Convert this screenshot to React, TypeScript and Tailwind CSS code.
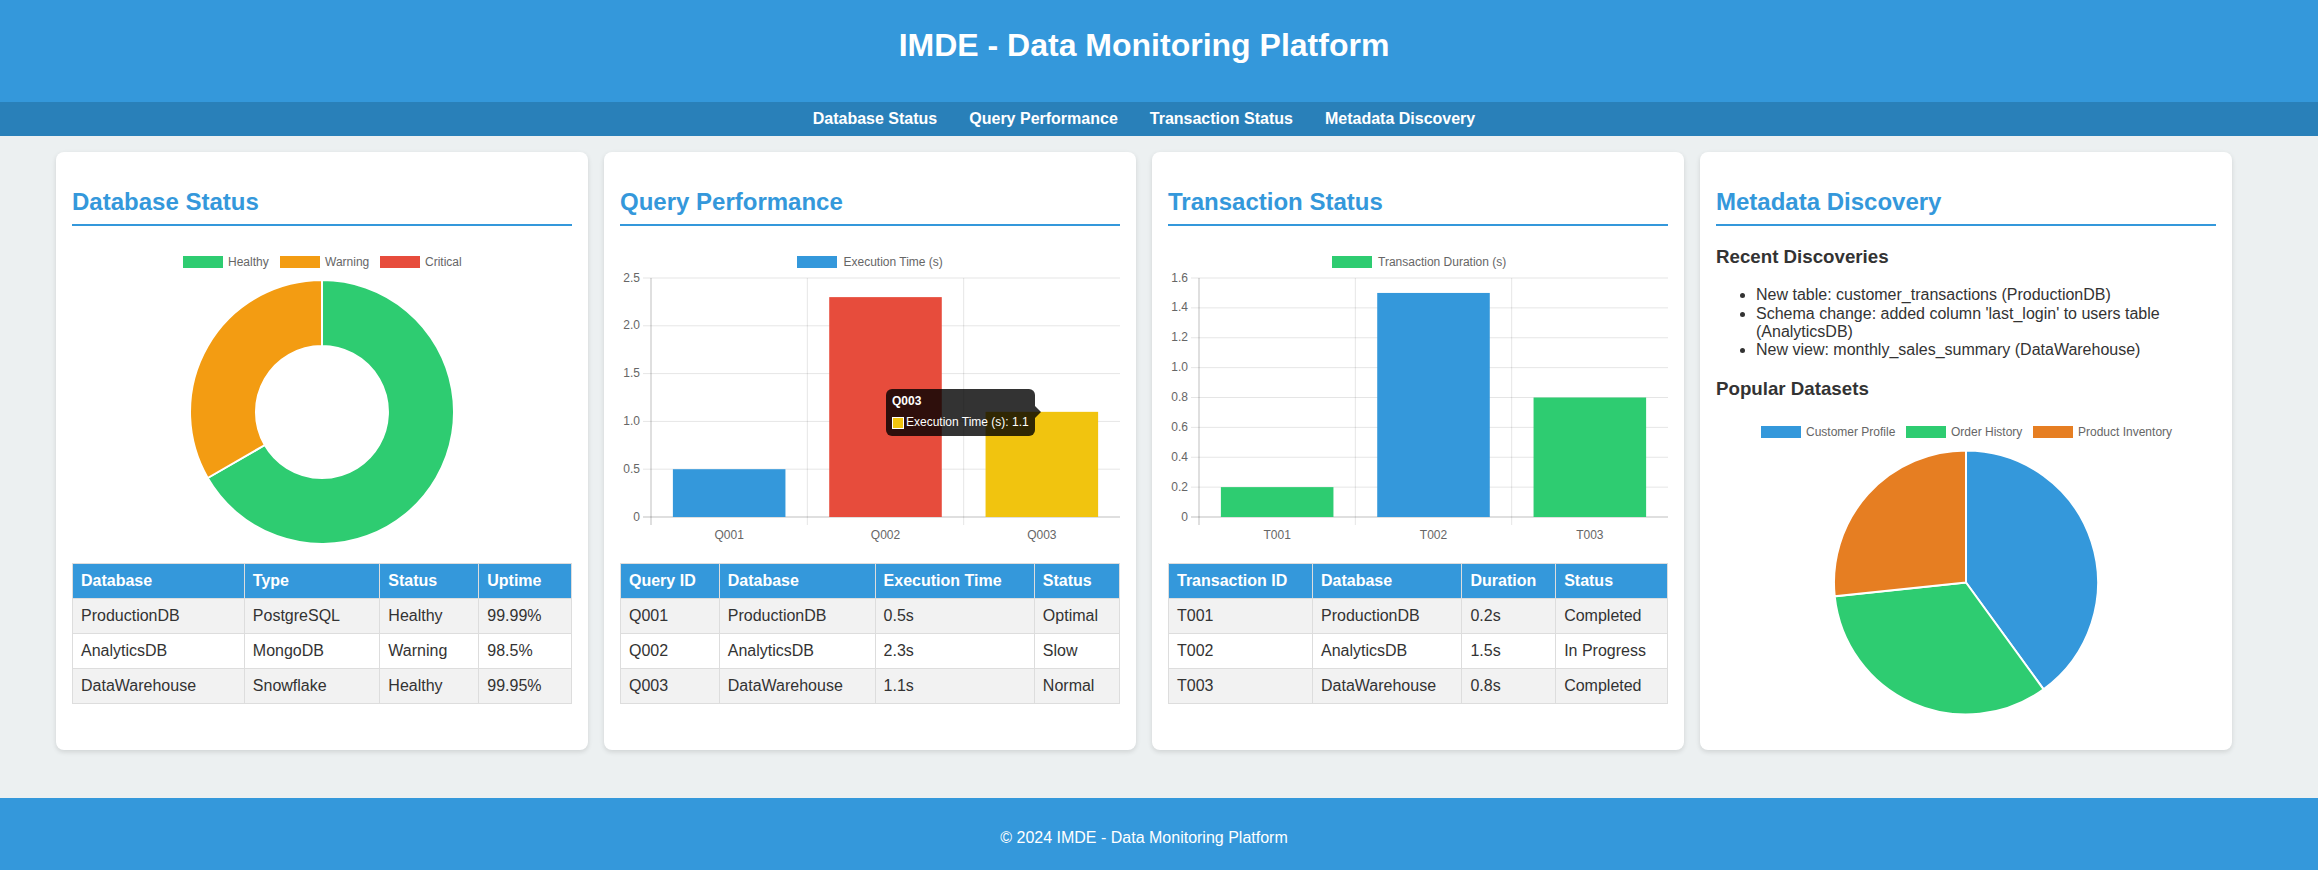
import React from "react"

const FONT = "'Liberation Sans', Arial, Helvetica, sans-serif"

type Legend = { label: string; color: string; boxX: number; textX: number }

type BarChartProps = {
  legend: Legend
  yTicks: string[]
  max: number
  labels: string[]
  values: number[]
  colors: string[]
  tooltip?: boolean
}

// plot box inside the 500x300 chart area
const L = 31
const R = 500
const T = 32
const B = 271

function LegendRow({ items }: { items: Legend[] }) {
  return (
    <g>
      {items.map((it) => (
        <g key={it.label}>
          <rect x={it.boxX} y={10} width={40} height={12} fill={it.color} />
          <text x={it.textX} y={20} fontSize={12} fill="#666" fontFamily={FONT}>
            {it.label}
          </text>
        </g>
      ))}
    </g>
  )
}

function BarChart({ legend, yTicks, max, labels, values, colors, tooltip }: BarChartProps) {
  const n = yTicks.length - 1
  const step = (B - T) / n
  const cw = (R - L) / labels.length
  const bw = cw * 0.72

  return (
    <svg width={500} height={300} className="block overflow-visible">
      <LegendRow items={[legend]} />

      {/* horizontal grid */}
      {yTicks.map((t, i) => {
        const y = T + i * step
        return (
          <g key={t}>
            <line
              x1={L - 8}
              x2={R}
              y1={y}
              y2={y}
              stroke={i === n ? "rgba(0,0,0,0.25)" : "rgba(0,0,0,0.1)"}
              strokeWidth={1}
            />
            <text x={20} y={y + 3.5} fontSize={12} fill="#666" textAnchor="end" fontFamily={FONT}>
              {t}
            </text>
          </g>
        )
      })}

      {/* vertical grid */}
      {labels.map((_, i) => {
        const x = L + i * cw
        return (
          <line
            key={i}
            x1={x}
            x2={x}
            y1={T}
            y2={B + 8}
            stroke={i === 0 ? "rgba(0,0,0,0.25)" : "rgba(0,0,0,0.1)"}
            strokeWidth={1}
          />
        )
      })}

      {/* bars */}
      {values.map((v, i) => {
        const cx = L + cw * (i + 0.5)
        const h = (v / max) * (B - T)
        return <rect key={i} x={cx - bw / 2} y={B - h} width={bw} height={h} fill={colors[i]} />
      })}

      {labels.map((l, i) => (
        <text
          key={l}
          x={L + cw * (i + 0.5)}
          y={292.5}
          fontSize={12}
          fill="#666"
          textAnchor="middle"
          fontFamily={FONT}
        >
          {l}
        </text>
      ))}

      {tooltip && (
        <g>
          <rect x={266} y={143} width={149} height={47} rx={6} fill="rgba(0,0,0,0.8)" />
          <path d="M415 160 L421 166 L415 172 Z" fill="rgba(0,0,0,0.8)" />
          <text x={272} y={159} fontSize={12} fontWeight="bold" fill="#fff" fontFamily={FONT}>
            Q003
          </text>
          <rect x={272.5} y={171.5} width={11} height={11} fill="#f1c40f" stroke="#fff" strokeWidth={1} />
          <text x={286} y={180} fontSize={12} fill="#fff" fontFamily={FONT}>
            Execution Time (s): 1.1
          </text>
        </g>
      )}
    </svg>
  )
}

function DonutChart() {
  return (
    <svg width={500} height={300} className="block">
      <LegendRow
        items={[
          { label: "Healthy", color: "#2ecc71", boxX: 111, textX: 156 },
          { label: "Warning", color: "#f39c12", boxX: 208, textX: 253 },
          { label: "Critical", color: "#e74c3c", boxX: 308, textX: 353 },
        ]}
      />
      <path
        d="M250 34 A132 132 0 1 1 135.7 232 L192.8 199 A66 66 0 1 0 250 100 Z"
        fill="#2ecc71"
        stroke="#fff"
        strokeWidth={2}
      />
      <path
        d="M135.7 232 A132 132 0 0 1 250 34 L250 100 A66 66 0 0 0 192.8 199 Z"
        fill="#f39c12"
        stroke="#fff"
        strokeWidth={2}
      />
    </svg>
  )
}

function PieChart() {
  return (
    <svg width={500} height={300} className="block">
      <LegendRow
        items={[
          { label: "Customer Profile", color: "#3498db", boxX: 45, textX: 90 },
          { label: "Order History", color: "#2ecc71", boxX: 190, textX: 235 },
          { label: "Product Inventory", color: "#e67e22", boxX: 317, textX: 362 },
        ]}
      />
      <path d="M250 166.5 L250 34.5 A132 132 0 0 1 327.6 273.3 Z" fill="#3498db" stroke="#fff" strokeWidth={2} />
      <path d="M250 166.5 L327.6 273.3 A132 132 0 0 1 118.7 180.3 Z" fill="#2ecc71" stroke="#fff" strokeWidth={2} />
      <path d="M250 166.5 L118.7 180.3 A132 132 0 0 1 250 34.5 Z" fill="#e67e22" stroke="#fff" strokeWidth={2} />
    </svg>
  )
}

function DataTable({ head, rows }: { head: string[]; rows: string[][] }) {
  return (
    <table className="w-full border-collapse mt-[17px] text-base">
      <tbody>
        <tr>
          {head.map((h) => (
            <th key={h} className="bg-[#3498db] text-white font-bold text-left p-2 border border-[#ddd] leading-[18px]">
              {h}
            </th>
          ))}
        </tr>
        {rows.map((r, i) => (
          <tr key={i} className={i % 2 === 0 ? "bg-[#f2f2f2]" : "bg-white"}>
            {r.map((c, j) => (
              <td key={j} className="p-2 border border-[#ddd] leading-[18px]">
                {c}
              </td>
            ))}
          </tr>
        ))}
      </tbody>
    </table>
  )
}

function Card({ title, children }: { title: string; children: React.ReactNode }) {
  return (
    <section className="w-[532px] h-[598px] shrink-0 bg-white rounded-lg shadow-[0_2px_5px_rgba(0,0,0,0.12)] p-4">
      <h2 className="mt-5 mb-5 pb-2 border-b-2 border-[#3498db] text-[24px] leading-[27.6px] font-bold text-[#3498db]">
        {title}
      </h2>
      {children}
    </section>
  )
}

export default function App() {
  return (
    <div className="min-h-screen bg-[#ecf0f1] text-[#333]" style={{ fontFamily: FONT }}>
      <header className="h-[102px] bg-[#3498db] text-white">
        <h1 className="pt-[27px] pr-[30px] text-center text-[32px] leading-[37px] font-bold">
          IMDE - Data Monitoring Platform
        </h1>
      </header>

      <nav className="h-[34px] bg-[#2980b9] flex items-center justify-center gap-8 pr-[30px]">
        {["Database Status", "Query Performance", "Transaction Status", "Metadata Discovery"].map((l) => (
          <a key={l} className="text-white font-bold text-base leading-[18px]">
            {l}
          </a>
        ))}
      </nav>

      <main className="pt-4 pb-12 pl-[56px] flex gap-4">
        <Card title="Database Status">
          <DonutChart />
          <DataTable
            head={["Database", "Type", "Status", "Uptime"]}
            rows={[
              ["ProductionDB", "PostgreSQL", "Healthy", "99.99%"],
              ["AnalyticsDB", "MongoDB", "Warning", "98.5%"],
              ["DataWarehouse", "Snowflake", "Healthy", "99.95%"],
            ]}
          />
        </Card>

        <Card title="Query Performance">
          <BarChart
            legend={{ label: "Execution Time (s)", color: "#3498db", boxX: 177, textX: 223.5 }}
            yTicks={["2.5", "2.0", "1.5", "1.0", "0.5", "0"]}
            max={2.5}
            labels={["Q001", "Q002", "Q003"]}
            values={[0.5, 2.3, 1.1]}
            colors={["#3498db", "#e74c3c", "#f1c40f"]}
            tooltip
          />
          <DataTable
            head={["Query ID", "Database", "Execution Time", "Status"]}
            rows={[
              ["Q001", "ProductionDB", "0.5s", "Optimal"],
              ["Q002", "AnalyticsDB", "2.3s", "Slow"],
              ["Q003", "DataWarehouse", "1.1s", "Normal"],
            ]}
          />
        </Card>

        <Card title="Transaction Status">
          <BarChart
            legend={{ label: "Transaction Duration (s)", color: "#2ecc71", boxX: 164, textX: 210 }}
            yTicks={["1.6", "1.4", "1.2", "1.0", "0.8", "0.6", "0.4", "0.2", "0"]}
            max={1.6}
            labels={["T001", "T002", "T003"]}
            values={[0.2, 1.5, 0.8]}
            colors={["#2ecc71", "#3498db", "#2ecc71"]}
          />
          <DataTable
            head={["Transaction ID", "Database", "Duration", "Status"]}
            rows={[
              ["T001", "ProductionDB", "0.2s", "Completed"],
              ["T002", "AnalyticsDB", "1.5s", "In Progress"],
              ["T003", "DataWarehouse", "0.8s", "Completed"],
            ]}
          />
        </Card>

        <Card title="Metadata Discovery">
          <h3 className="mb-[19px] text-[18.72px] leading-[21.5px] font-bold">Recent Discoveries</h3>
          <ul className="list-disc pl-10 mb-[18px] leading-[18.4px]">
            <li>New table: customer_transactions (ProductionDB)</li>
            <li>Schema change: added column 'last_login' to users table (AnalyticsDB)</li>
            <li>New view: monthly_sales_summary (DataWarehouse)</li>
          </ul>
          <h3 className="mb-[17px] text-[18.72px] leading-[21.5px] font-bold">Popular Datasets</h3>
          <PieChart />
        </Card>
      </main>

      <footer className="h-[72px] bg-[#3498db] text-white text-center pt-[31px] pr-[30px]">
        <p className="leading-[18px]">© 2024 IMDE - Data Monitoring Platform</p>
      </footer>
    </div>
  )
}
